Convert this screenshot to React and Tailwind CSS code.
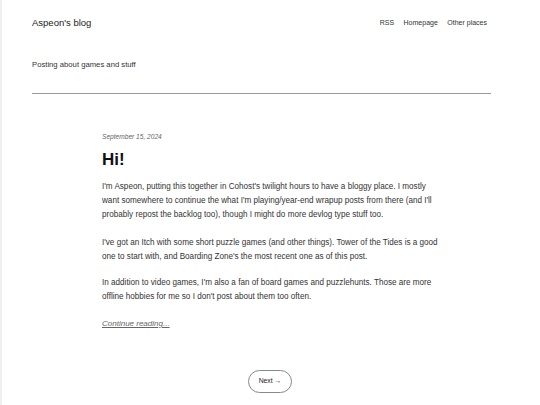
import React from 'react';

const paragraphs = [
    "I'm Aspeon, putting this together in Cohost's twilight hours to have a bloggy place. I mostly want somewhere to continue the what I'm playing/year-end wrapup posts from there (and I'll probably repost the backlog too), though I might do more devlog type stuff too.",
    "I've got an Itch with some short puzzle games (and other things). Tower of the Tides is a good one to start with, and Boarding Zone's the most recent one as of this post.",
    "In addition to video games, I'm also a fan of board games and puzzlehunts. Those are more offline hobbies for me so I don't post about them too often.",
];

export default function App() {
    return (
        <div
            className="min-h-[405px] bg-white border-l-2 border-[#efefef] text-[#222]"
            style={{ fontFamily: '"Liberation Sans", Arial, sans-serif' }}
        >
            <header className="pl-[30px] pr-[49px]">
                <div className="flex items-center justify-between pt-[17px] pr-[4px]">
                    <a className="text-[9.5px] leading-[12px] text-[#222]">Aspeon's blog</a>
                    <nav className="flex gap-[9.5px] text-[7px] leading-[12px] text-[#333]">
                        <a>RSS</a>
                        <a>Homepage</a>
                        <a>Other places</a>
                    </nav>
                </div>
                <p className="mt-[31px] text-[7.7px] leading-[10px] text-[#333]">Posting about games and stuff</p>
                <div className="mt-[23px] border-b border-[#999]" />
            </header>

            <main className="ml-[100px] w-[336px]">
                <article>
                    <div className="mt-[39px] text-[6.6px] leading-[8px] italic text-[#666]">September 15, 2024</div>
                    <h1 className="mt-[9px] text-[17px] leading-[20px] font-bold text-[#111]">Hi!</h1>
                    <div className="mt-[10px] text-[8.15px] leading-[14px] text-[#333]">
                        <p>{paragraphs[0]}</p>
                        <p className="mt-[14px]">{paragraphs[1]}</p>
                        <p className="mt-[12px]">{paragraphs[2]}</p>
                    </div>
                    <a className="block mt-[13px] text-[8px] leading-[14px] italic underline text-[#666]">Continue reading...</a>
                </article>

                <div className="flex justify-center mt-[39px]">
                    <a className="flex items-center justify-center w-[44px] h-[23px] rounded-full border border-[#888] text-[6.8px] text-[#222]">
                        Next →
                    </a>
                </div>
            </main>
        </div>
    );
}
